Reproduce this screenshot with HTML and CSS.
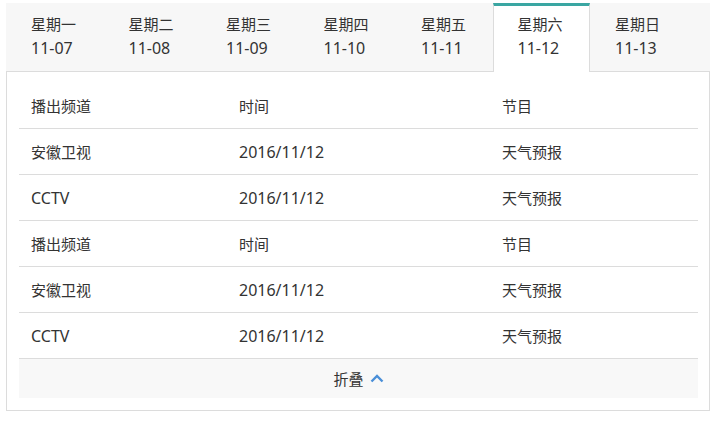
FILE: index.html
```html
<!DOCTYPE html>
<html lang="zh-CN">
<head>
<meta charset="utf-8">
<link rel="stylesheet" href="styles.css">
</head>
<body>
<div class="schedule">
  <div class="tabs">
    <div class="tab"><div>星期一</div><div class="num">11-07</div></div>
    <div class="tab"><div>星期二</div><div class="num">11-08</div></div>
    <div class="tab"><div>星期三</div><div class="num">11-09</div></div>
    <div class="tab"><div>星期四</div><div class="num">11-10</div></div>
    <div class="tab"><div>星期五</div><div class="num">11-11</div></div>
    <div class="tab active"><div>星期六</div><div class="num">11-12</div></div>
    <div class="tab"><div>星期日</div><div class="num">11-13</div></div>
  </div>
  <div class="panel">
    <div class="table">
      <div class="row"><div>播出频道</div><div>时间</div><div>节目</div></div>
      <div class="row"><div>安徽卫视</div><div class="num">2016/11/12</div><div>天气预报</div></div>
      <div class="row"><div class="num">CCTV</div><div class="num">2016/11/12</div><div>天气预报</div></div>
      <div class="row"><div>播出频道</div><div>时间</div><div>节目</div></div>
      <div class="row"><div>安徽卫视</div><div class="num">2016/11/12</div><div>天气预报</div></div>
      <div class="row"><div class="num">CCTV</div><div class="num">2016/11/12</div><div>天气预报</div></div>
    </div>
    <div class="collapse">
      <span>折叠</span>
      <svg class="chev" width="14" height="9" viewBox="0 0 14 9"><path d="M1.5 7.5 L7 2 L12.5 7.5" fill="none" stroke="#4a8fd8" stroke-width="2.4"/></svg>
    </div>
  </div>
</div>
</body>
</html>
```

FILE: styles.css
```css
* { box-sizing: border-box; }
body {
  margin: 0;
  background: #fff;
  font-family: "Noto Sans", "Noto Sans CJK SC", sans-serif;
  font-size: 15px;
  color: #333;
}
.schedule {
  width: 704px;
  margin: 3px 0 0 6px;
}
.tabs {
  display: flex;
  height: 69px;
  background: #f7f7f7;
  border-bottom: 1px solid #dcdcdc;
}
.tab {
  width: 97.5px;
  padding: 9px 0 0 25px;
  line-height: 24px;
  color: #333;
}
.tab.active {
  background: #fff;
  border-top: 3px solid #3aa6a2;
  border-left: 1px solid #dcdcdc;
  border-right: 1px solid #dcdcdc;
  padding-top: 6px;
  padding-left: 24px;
  height: 69px;
  margin-left: -1px;
}
.num {
  font-size: 16px;
}
.panel {
  border: 1px solid #dcdcdc;
  border-top: none;
  padding: 11px 11px 12px 12px;
}
.row {
  display: grid;
  grid-template-columns: 208px 263px 1fr;
  height: 46px;
  align-items: center;
  border-bottom: 1px solid #dcdcdc;
}
.row > div {
  padding-left: 12px;
}
.collapse {
  height: 39px;
  background: #f8f8f8;
  display: flex;
  align-items: center;
  justify-content: center;
  gap: 6px;
}
.chev {
  display: block;
  margin-top: -1px;
}
```
